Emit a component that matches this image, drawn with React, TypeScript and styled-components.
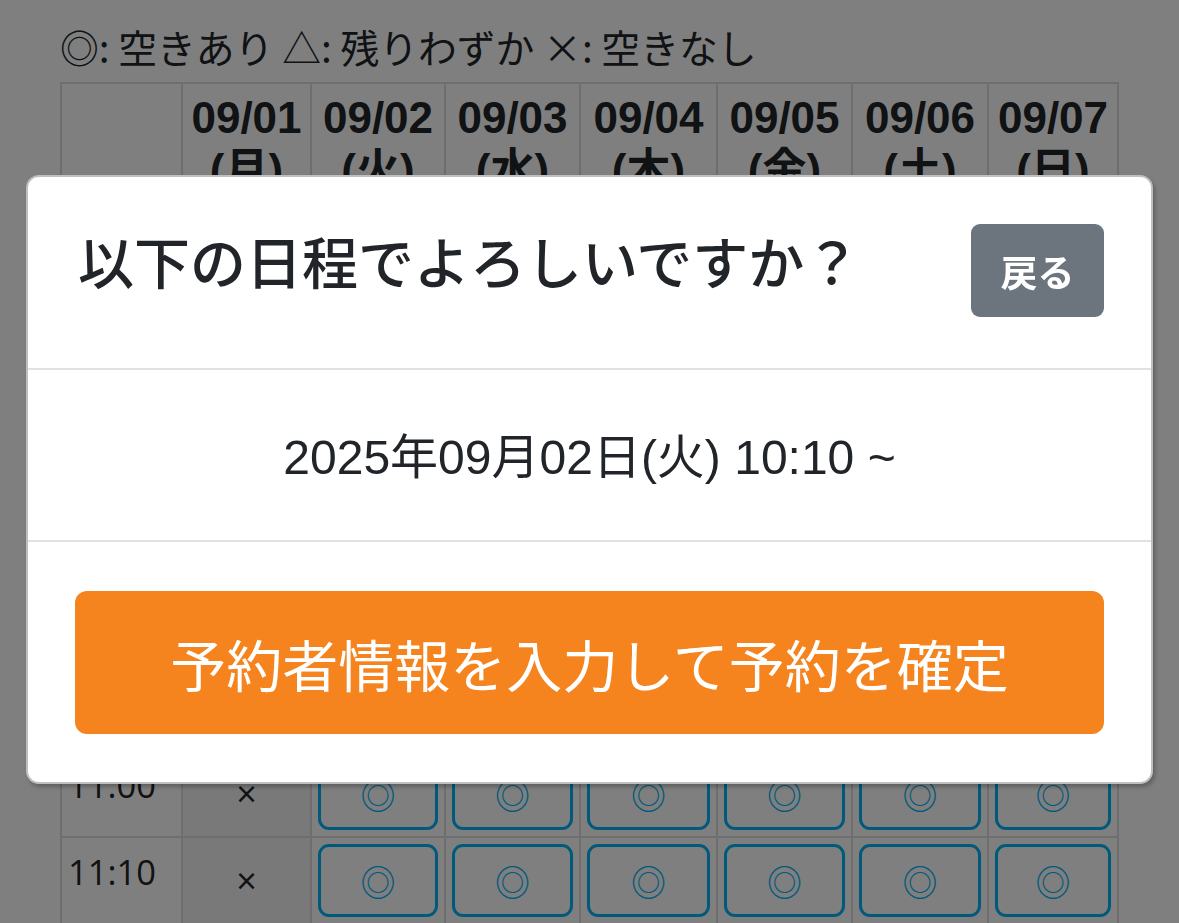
import React from 'react';
import styled, {createGlobalStyle} from 'styled-components';

const GlobalStyle = createGlobalStyle`
    html, body {
        margin: 0;
        padding: 0;
        background: #fff;
        overflow: hidden;
    }
    body {
        font-family: "Noto Sans CJK JP", "Noto Sans", sans-serif;
        color: #212529;
    }
`;

const Page = styled.div`
    padding: 18px 0 0 60px;
`;

const Legend = styled.p`
    margin: 0 0 7px;
    font-size: 38.8px;
    line-height: 57px;
    color: #212529;
`;

const Table = styled.table`
    width: 1057px;
    table-layout: fixed;
    border-collapse: collapse;
`;

const HeadCell = styled.th`
    height: 135px;
    padding: 8px 0 0;
    vertical-align: top;
    border: 2px solid #dcdcdc;
    font-family: "Liberation Sans", "Noto Sans CJK JP", sans-serif;
    font-size: 44px;
    font-weight: 700;
    line-height: 52px;
    text-align: center;
    white-space: pre-line;
`;

const TimeCell = styled.td`
    padding: 8px 0 0 6px;
    vertical-align: top;
    border: 2px solid #dcdcdc;
    font-family: "Open Sans", "Noto Sans", sans-serif;
    font-size: 34.5px;
    line-height: 51px;
`;

const SlotCell = styled.td<{$closed?: boolean}>`
    height: 73px;
    padding: 6px 6px;
    border: 2px solid #dcdcdc;
    background: ${p => (p.$closed ? '#f2f2f2' : '#fff')};
    text-align: center;
    vertical-align: middle;
    font-family: "Open Sans", "Noto Sans", sans-serif;
    font-size: 36px;
    line-height: 40px;
`;

const SlotButton = styled.button`
    display: block;
    width: 100%;
    height: 73px;
    border: 3px solid #00b4f8;
    border-radius: 11px;
    background: transparent;
    color: #00b4f8;
    font-family: "Noto Sans CJK JP", sans-serif;
    font-size: 35px;
    line-height: 1;
    padding: 0;
`;

const Backdrop = styled.div`
    position: fixed;
    inset: 0;
    background: rgba(0, 0, 0, 0.5);
    display: flex;
    flex-direction: column;
    padding: 175px 26px 0;
`;

const Dialog = styled.div`
    background: #fff;
    border: 2px solid rgba(0, 0, 0, 0.25);
    border-radius: 13px;
    box-shadow: 2px 3px 4px rgba(0, 0, 0, 0.25);
    overflow: hidden;
`;

const DialogHeader = styled.div`
    display: flex;
    align-items: flex-start;
    justify-content: space-between;
    padding: 47px 47px 51px 50px;
    border-bottom: 2px solid #dee2e6;
`;

const Title = styled.h5`
    margin: 0;
    font-size: 56px;
    font-weight: 500;
    line-height: 72px;
    color: #212529;
`;

const BackButton = styled.button`
    width: 133px;
    height: 93px;
    border: none;
    border-radius: 9px;
    background: #6c757d;
    color: #fff;
    font-family: "Noto Sans CJK JP", sans-serif;
    font-size: 37px;
    font-weight: 700;
`;

const DialogBody = styled.div`
    padding: 52px 48px 46px;
    border-bottom: 2px solid #dee2e6;
    text-align: center;
    font-family: "Liberation Sans", "Noto Sans CJK JP", sans-serif;
    font-size: 48px;
    line-height: 72px;
`;

const DialogFooter = styled.div`
    padding: 49px 47px 48px;
`;

const ConfirmButton = styled.button`
    width: 100%;
    height: 143px;
    border: none;
    border-radius: 12px;
    background: #f5841f;
    color: #fff;
    font-family: "Noto Sans CJK JP", sans-serif;
    font-size: 56px;
    font-weight: 400;
`;

const days = ['09/01\n(月)', '09/02\n(火)', '09/03\n(水)', '09/04\n(木)', '09/05\n(金)', '09/06\n(土)', '09/07\n(日)'];
const widths = [121, 129, 134, 135, 137, 135, 136, 130];
const times = ['10:00', '10:10', '10:20', '10:30', '10:40', '10:50', '11:00', '11:10', '11:20'];

export default function App() {
    return (
        <>
            <GlobalStyle/>
            <Page>
                <Legend>◎: 空きあり △: 残りわずか ×: 空きなし</Legend>
                <Table>
                    <colgroup>
                        {widths.map((w, i) => <col key={i} style={{width: w}}/>)}
                    </colgroup>
                    <thead>
                        <tr>
                            <HeadCell/>
                            {days.map(d => <HeadCell key={d}>{d}</HeadCell>)}
                        </tr>
                    </thead>
                    <tbody>
                        {times.map(t => (
                            <tr key={t}>
                                <TimeCell>{t}</TimeCell>
                                {days.map((d, i) => i === 0
                                    ? <SlotCell key={d} $closed>×</SlotCell>
                                    : <SlotCell key={d}><SlotButton>◎</SlotButton></SlotCell>)}
                            </tr>
                        ))}
                    </tbody>
                </Table>
            </Page>
            <Backdrop>
                <Dialog>
                    <DialogHeader>
                        <Title>以下の日程でよろしいですか？</Title>
                        <BackButton>戻る</BackButton>
                    </DialogHeader>
                    <DialogBody>2025年09月02日(火) 10:10 ~</DialogBody>
                    <DialogFooter>
                        <ConfirmButton>予約者情報を入力して予約を確定</ConfirmButton>
                    </DialogFooter>
                </Dialog>
            </Backdrop>
        </>
    );
}
